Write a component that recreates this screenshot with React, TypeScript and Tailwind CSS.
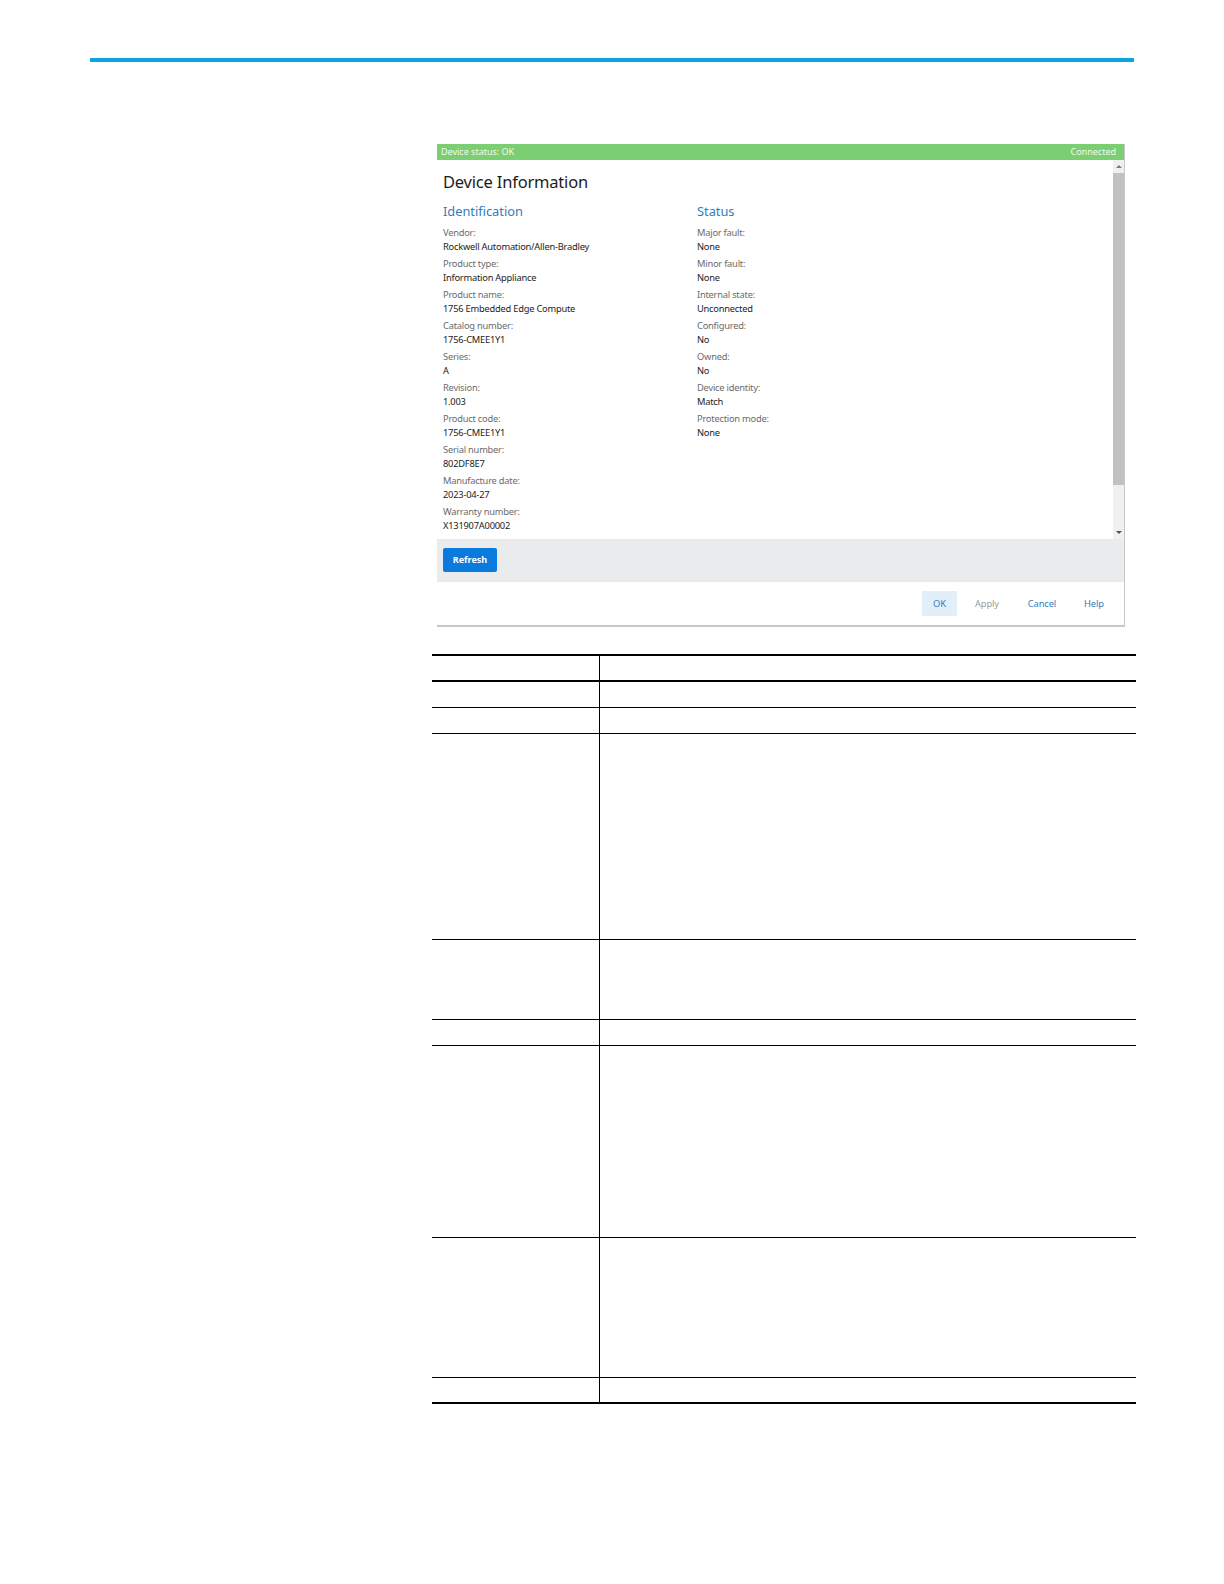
const identification = [
  ["Vendor:", "Rockwell Automation/Allen-Bradley"],
  ["Product type:", "Information Appliance"],
  ["Product name:", "1756 Embedded Edge Compute"],
  ["Catalog number:", "1756-CMEE1Y1"],
  ["Series:", "A"],
  ["Revision:", "1.003"],
  ["Product code:", "1756-CMEE1Y1"],
  ["Serial number:", "802DF8E7"],
  ["Manufacture date:", "2023-04-27"],
  ["Warranty number:", "X131907A00002"],
];

const status = [
  ["Major fault:", "None"],
  ["Minor fault:", "None"],
  ["Internal state:", "Unconnected"],
  ["Configured:", "No"],
  ["Owned:", "No"],
  ["Device identity:", "Match"],
  ["Protection mode:", "None"],
];

// row heights of the empty table under the dialog
const rows = [
  "h-[26px] border-t-2",
  "h-[27px] border-t-2",
  "h-[26px] border-t",
  "h-[206px] border-t",
  "h-[80px] border-t",
  "h-[26px] border-t",
  "h-[192px] border-t",
  "h-[140px] border-t",
  "h-[25px] border-t",
];

function Field({ label, value }: { label: string; value: string }) {
  return (
    <div className="h-[31px] text-[9.3px] leading-[14px] tracking-[-0.22px]">
      <div className="h-[14px] text-[#6b6b6b]">{label}</div>
      <div className="h-[14px] text-[#1c1c1c]">{value}</div>
    </div>
  );
}

function Dialog() {
  return (
    <div className="ml-[437px] mt-[82px] w-[688px] border-b-2 border-r border-[#c4c8cc] font-['Noto_Sans',sans-serif]">
      <div className="flex h-4 items-center justify-between bg-[#7bce71] pl-[4px] pr-[8px] text-[9px] text-[#f1faef]">
        <span>Device status: OK</span>
        <span>Connected</span>
      </div>
      <div className="flex h-[379px]">
        <div className="flex-1 pl-[6px]">
          <h1 className="mt-[10px] h-[24px] text-[16.5px] leading-[24px] tracking-[-0.2px] text-[#1c1c1c]">Device Information</h1>
          <div className="mt-[5px] flex">
            <div className="w-[254px]">
              <h2 className="mb-[3px] h-[24px] text-[12.8px] leading-[24px] text-[#2f7dc0]">Identification</h2>
              {identification.map(([label, value]) => (
                <Field key={label} label={label} value={value} />
              ))}
            </div>
            <div>
              <h2 className="mb-[3px] h-[24px] text-[12.8px] leading-[24px] text-[#2f7dc0]">Status</h2>
              {status.map(([label, value]) => (
                <Field key={label} label={label} value={value} />
              ))}
            </div>
          </div>
        </div>
        <div className="flex w-[11px] flex-col items-center bg-[#f0f0f0]">
          <div className="flex h-[13px] items-center">
            <div className="h-0 w-0 border-x-[3px] border-b-[3px] border-x-transparent border-b-[#7a7a7a]" />
          </div>
          <div className="h-[312px] w-full bg-[#c1c1c1]" />
          <div className="flex flex-1 items-end pb-[5px]">
            <div className="h-0 w-0 border-x-[3px] border-t-[3px] border-x-transparent border-t-[#505050]" />
          </div>
        </div>
      </div>
      <div className="flex h-[43px] items-center bg-[#e9ebed] pb-[2px] pl-[6px]">
        <button className="h-6 w-[54px] rounded-[2px] bg-[#0a7bdc] text-[9px] font-bold text-white">Refresh</button>
      </div>
      <div className="flex h-[43px] items-center justify-end pr-[10px] text-[9.3px] tracking-[-0.1px]">
        <span className="flex h-[25px] w-[35px] items-center justify-center bg-[#e3eff8] text-[#2f7dc0]">OK</span>
        <span className="ml-[10px] flex w-[40px] items-center justify-center text-[#9a9a9a]">Apply</span>
        <span className="ml-[15px] flex w-[40px] items-center justify-center text-[#2f7dc0]">Cancel</span>
        <span className="ml-[12px] flex w-[40px] items-center justify-center text-[#2f7dc0]">Help</span>
      </div>
    </div>
  );
}

function EmptyTable() {
  return (
    <div className="ml-[432px] mt-[27px] w-[704px] border-b-2 border-black">
      {rows.map((row, i) => (
        <div key={i} className={`flex ${row} border-black`}>
          <div className="w-[168px] border-r border-black" />
          <div className="flex-1" />
        </div>
      ))}
    </div>
  );
}

export default function App() {
  return (
    <div className="h-[1584px] w-[1224px] overflow-hidden bg-white pt-[58px]">
      <div className="ml-[90px] h-1 w-[1044px] bg-[#0ba5e2]" />
      <Dialog />
      <EmptyTable />
    </div>
  );
}
